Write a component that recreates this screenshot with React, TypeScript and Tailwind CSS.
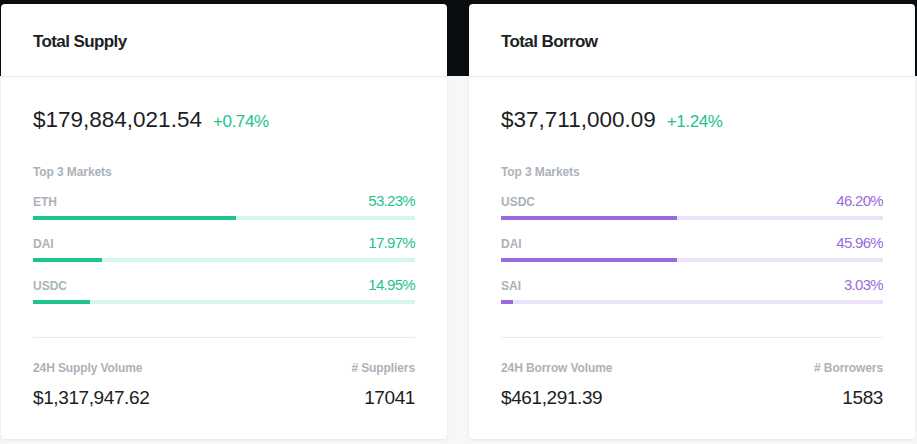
import React from "react";

type Market = { name: string; pct: number };

type CardProps = {
  title: string;
  total: string;
  change: string;
  markets: Market[];
  fill: string;
  track: string;
  text: string;
  volLabel: string;
  volValue: string;
  countLabel: string;
  countValue: string;
};

function StatCard(p: CardProps) {
  return (
    <div className="mt-[4px] w-[446px] h-[435px] shrink-0 bg-white rounded-[4px] shadow-[0_1px_3px_rgba(0,0,0,0.08)] flex flex-col">
      <div className="h-[73px] border-b border-[#e6e8eb] px-8 pt-[28px]">
        <div className="text-[17px] leading-[20px] font-bold tracking-[-0.6px] text-[#1c1f24]">
          {p.title}
        </div>
      </div>
      <div className="px-8 flex flex-col">
        <div className="pt-[29px] flex items-baseline gap-[11px] leading-[28px]">
          <span className="text-[22.5px] text-[#1b1e23]">{p.total}</span>
          <span className="text-[17px] text-[#22c38e] tracking-[-0.4px]">{p.change}</span>
        </div>
        <div className="mt-[28px] text-[12px] leading-[16px] font-bold text-[#abb2b9] tracking-[-0.1px]">
          Top 3 Markets
        </div>
        <div className="mt-[12px] flex flex-col">
          {p.markets.map((m) => (
            <div key={m.name} className="h-[42px] flex flex-col">
              <div className="h-[18px] flex items-baseline justify-between leading-[18px]">
                <span className="text-[12px] font-bold text-[#abb2b9]">{m.name}</span>
                <span className={`text-[15px] tracking-[-0.7px] ${p.text}`}>
                  {m.pct.toFixed(2)}%
                </span>
              </div>
              <div className={`mt-[6px] h-[4px] w-full ${p.track}`}>
                <div className={`h-full ${p.fill}`} style={{ width: `${m.pct}%` }} />
              </div>
            </div>
          ))}
        </div>
        <div className="mt-[19px] h-px bg-[#e8eaed]" />
        <div className="mt-[22px] flex justify-between text-[12px] leading-[16px] font-bold text-[#abb2b9] tracking-[-0.1px]">
          <span>{p.volLabel}</span>
          <span>{p.countLabel}</span>
        </div>
        <div className="mt-[10px] flex justify-between text-[19px] leading-[24px] text-[#1b1e23] tracking-[-0.4px]">
          <span>{p.volValue}</span>
          <span>{p.countValue}</span>
        </div>
      </div>
    </div>
  );
}

export default function App() {
  return (
    <div
      className="w-[917px] h-[444px] overflow-hidden bg-[linear-gradient(to_bottom,#0a0d10_76px,#f6f7f9_76px)] pl-[1px] flex gap-[22px]"
      style={{ fontFamily: '"Liberation Sans", Arial, sans-serif' }}
    >
      <StatCard
        title="Total Supply"
        total="$179,884,021.54"
        change="+0.74%"
        markets={[
          { name: "ETH", pct: 53.23 },
          { name: "DAI", pct: 17.97 },
          { name: "USDC", pct: 14.95 },
        ]}
        fill="bg-[#1ec38f]"
        track="bg-[#d6f5eb]"
        text="text-[#1ec38f]"
        volLabel="24H Supply Volume"
        volValue="$1,317,947.62"
        countLabel="# Suppliers"
        countValue="17041"
      />
      <StatCard
        title="Total Borrow"
        total="$37,711,000.09"
        change="+1.24%"
        markets={[
          { name: "USDC", pct: 46.2 },
          { name: "DAI", pct: 45.96 },
          { name: "SAI", pct: 3.03 },
        ]}
        fill="bg-[#9a6bdb]"
        track="bg-[#e9e2f8]"
        text="text-[#9a6bdb]"
        volLabel="24H Borrow Volume"
        volValue="$461,291.39"
        countLabel="# Borrowers"
        countValue="1583"
      />
    </div>
  );
}
